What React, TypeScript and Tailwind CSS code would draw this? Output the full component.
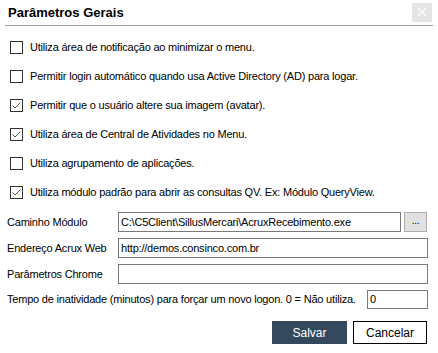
import React, { useState } from 'react';

const options = [
  { label: 'Utiliza área de notificação ao minimizar o menu.', checked: false },
  { label: 'Permitir login automático quando usa Active Directory (AD) para logar.', checked: false },
  { label: 'Permitir que o usuário altere sua imagem (avatar).', checked: true },
  { label: 'Utiliza área de Central de Atividades no Menu.', checked: true },
  { label: 'Utiliza agrupamento de aplicações.', checked: false },
  { label: 'Utiliza módulo padrão para abrir as consultas QV. Ex: Módulo QueryView.', checked: true },
];

const CheckBox: React.FC<{ checked: boolean; onClick: () => void }> = ({ checked, onClick }) => (
  <span
    onClick={onClick}
    className="w-[13px] h-[13px] border border-[#333] bg-white flex items-center justify-center shrink-0"
  >
    {checked && (
      <svg width="11" height="11" viewBox="0 0 11 11">
        <path d="M1.5 5.5 L4 8 L9.5 2.5" fill="none" stroke="#555" strokeWidth="1" />
      </svg>
    )}
  </span>
);

export default function App() {
  const [checks, setChecks] = useState(options.map((o) => o.checked));

  return (
    <div
      className="w-[438px] h-[353px] bg-white text-black text-[11px] tracking-[-0.2px] overflow-hidden"
      style={{ fontFamily: '"Liberation Sans", Arial, sans-serif' }}
    >
      {/* Header */}
      <div className="mx-[5px] h-[26px] flex items-center justify-between border-b border-[#a0a0a0]">
        <span className="pl-[3px] font-bold text-[13px] tracking-normal">Parâmetros Gerais</span>
        <button className="w-[20px] h-[19px] bg-[#e5e5e5] flex items-center justify-center mr-[1px] mb-[1px]">
          <svg width="10" height="10" viewBox="0 0 10 10">
            <path d="M1 1 L9 9 M9 1 L1 9" stroke="#fff" strokeWidth="1.2" />
          </svg>
        </button>
      </div>

      {/* Checkbox list */}
      <div className="flex flex-col gap-[16px] pl-[10px] pt-[15px]">
        {options.map((o, i) => (
          <label key={i} className="flex items-center gap-[7px] h-[13px]">
            <CheckBox
              checked={checks[i]}
              onClick={() => setChecks((c) => c.map((v, j) => (j === i ? !v : v)))}
            />
            <span>{o.label}</span>
          </label>
        ))}
      </div>

      {/* Fields */}
      <div className="flex flex-col gap-[6px] pl-[7px] pr-[10px] mt-[13px]">
        <div className="flex items-center h-[20px]">
          <span className="w-[111px]">Caminho Módulo</span>
          <div className="w-[283px] h-[20px] border border-[#7a7a7a] flex items-center px-[2px]">
            C:\C5Client\SillusMercari\AcruxRecebimento.exe
          </div>
          <button className="ml-[3px] w-[23px] h-[20px] bg-[#e1e1e1] border border-[#adadad] text-[10px] leading-none flex items-end justify-center pb-[5px]">
            ...
          </button>
        </div>
        <div className="flex items-center h-[20px]">
          <span className="w-[111px]">Endereço Acrux Web</span>
          <div className="flex-1 h-[20px] border border-[#7a7a7a] flex items-center px-[2px]">
            http://demos.consinco.com.br
          </div>
        </div>
        <div className="flex items-center h-[20px]">
          <span className="w-[111px]">Parâmetros Chrome</span>
          <div className="flex-1 h-[20px] border border-[#7a7a7a]"></div>
        </div>
        <div className="flex items-center h-[19px]">
          <span className="flex-1 whitespace-nowrap">
            Tempo de inatividade (minutos) para forçar um novo logon. 0 = Não utiliza.
          </span>
          <div className="w-[61px] h-[19px] border border-[#7a7a7a] flex items-center px-[2px]">0</div>
        </div>
      </div>

      {/* Buttons */}
      <div className="flex justify-end gap-[6px] pr-[11px] mt-[12px]">
        <button className="w-[75px] h-[23px] bg-[#34495e] text-white text-[12px] tracking-normal">Salvar</button>
        <button className="w-[74px] h-[23px] bg-white border border-black text-[12px] tracking-normal">Cancelar</button>
      </div>
    </div>
  );
}
